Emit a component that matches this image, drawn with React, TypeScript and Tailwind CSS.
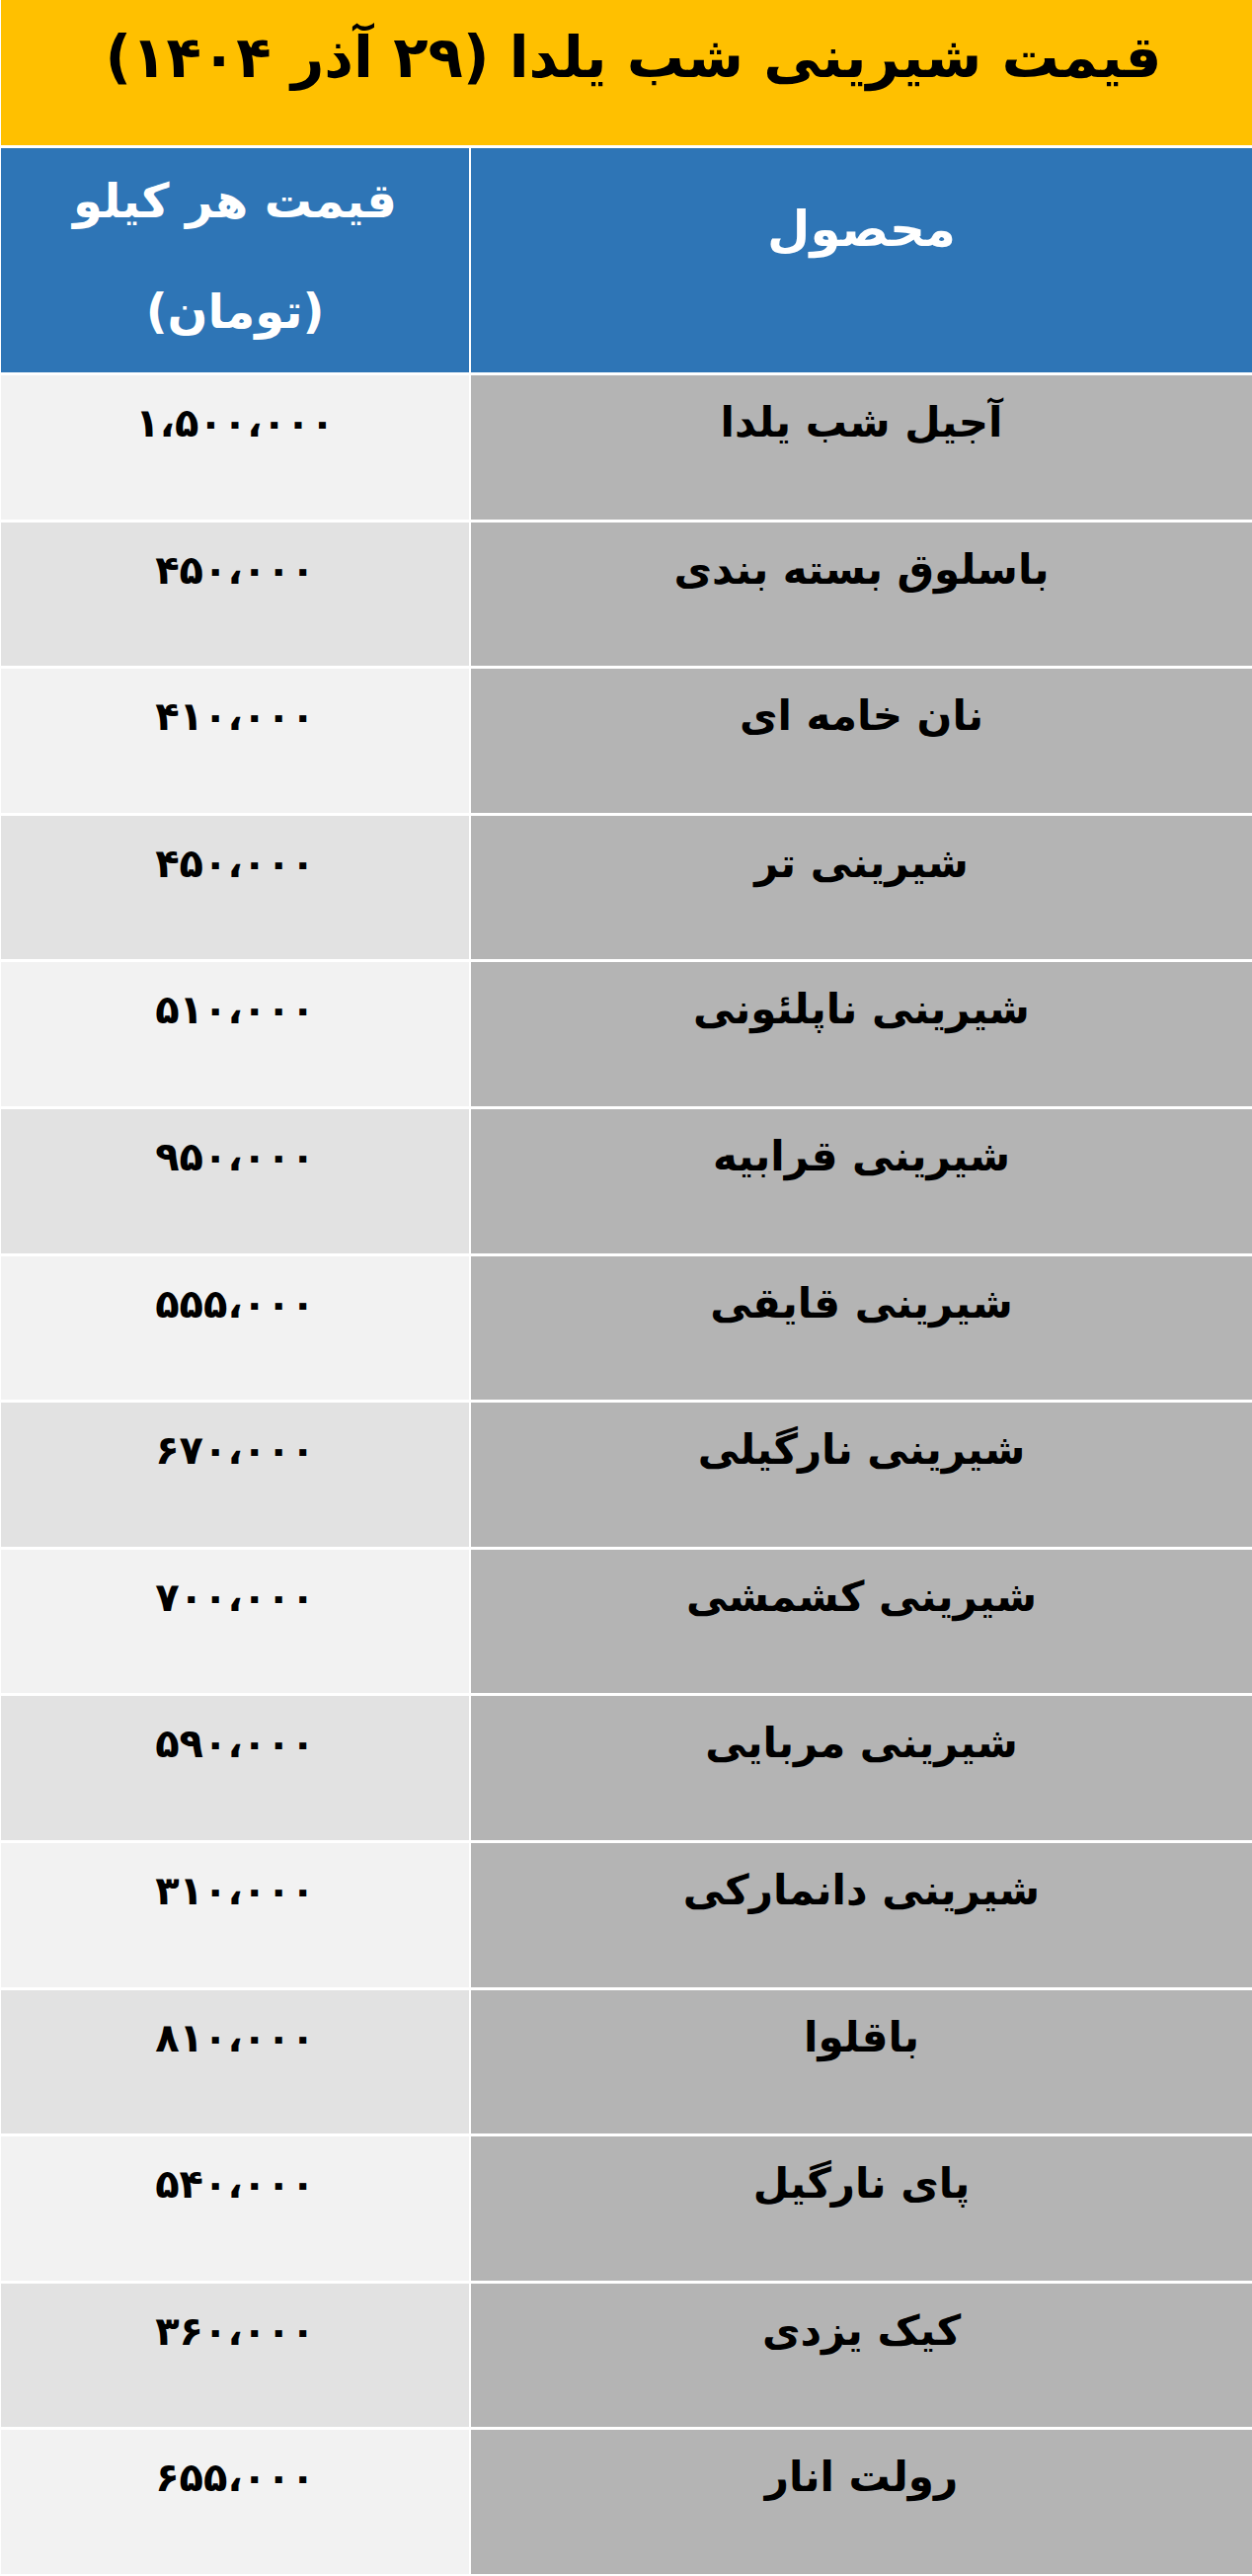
const rows = [
  { name: 'آجیل شب یلدا', price: '۱،۵۰۰،۰۰۰' },
  { name: 'باسلوق بسته بندی', price: '۴۵۰،۰۰۰' },
  { name: 'نان خامه ای', price: '۴۱۰،۰۰۰' },
  { name: 'شیرینی تر', price: '۴۵۰،۰۰۰' },
  { name: 'شیرینی ناپلئونی', price: '۵۱۰،۰۰۰' },
  { name: 'شیرینی قرابیه', price: '۹۵۰،۰۰۰' },
  { name: 'شیرینی قایقی', price: '۵۵۵،۰۰۰' },
  { name: 'شیرینی نارگیلی', price: '۶۷۰،۰۰۰' },
  { name: 'شیرینی کشمشی', price: '۷۰۰،۰۰۰' },
  { name: 'شیرینی مربایی', price: '۵۹۰،۰۰۰' },
  { name: 'شیرینی دانمارکی', price: '۳۱۰،۰۰۰' },
  { name: 'باقلوا', price: '۸۱۰،۰۰۰' },
  { name: 'پای نارگیل', price: '۵۴۰،۰۰۰' },
  { name: 'کیک یزدی', price: '۳۶۰،۰۰۰' },
  { name: 'رولت انار', price: '۶۵۵،۰۰۰' },
];

export default function App() {
  return (
    <div
      dir="rtl"
      className="w-[1268px] h-[2608px] overflow-hidden bg-white pl-[1px] font-['DejaVu_Sans',sans-serif] font-bold"
    >
      {/* title */}
      <div className="h-[147px] bg-[#FFC000] pt-[16px] pl-[14px] text-center text-[58px] leading-[84px] text-black">
        قیمت شیرینی شب یلدا (۲۹ آذر ۱۴۰۴)
      </div>

      {/* header */}
      <div className="mt-[3px] grid h-[227px] grid-cols-[791px_474px] gap-x-[2px] text-white">
        <div className="flex items-start justify-center bg-[#2E75B6] pt-[50px] text-[50px] leading-[64px]">
          محصول
        </div>
        <div className="flex flex-col items-center bg-[#2E75B6] pt-[20px] text-[48px]">
          <span className="leading-[66px]">قیمت هر کیلو</span>
          <span className="mt-[46px] leading-[66px]">(تومان)</span>
        </div>
      </div>

      {/* rows */}
      <div className="mt-[3px] flex flex-col gap-y-[3px]">
        {rows.map((r, i) => (
          <div key={i} className="grid h-[145.6px] grid-cols-[791px_474px] gap-x-[2px] text-black">
            <div className="bg-[#B4B4B4] pt-[16px] text-center text-[42px] leading-[64px]">
              {r.name}
            </div>
            <div
              className={`pt-[16px] text-center text-[40px] leading-[64px] ${
                i % 2 === 0 ? 'bg-[#F2F2F2]' : 'bg-[#E2E2E2]'
              }`}
            >
              {r.price}
            </div>
          </div>
        ))}
      </div>
    </div>
  );
}
